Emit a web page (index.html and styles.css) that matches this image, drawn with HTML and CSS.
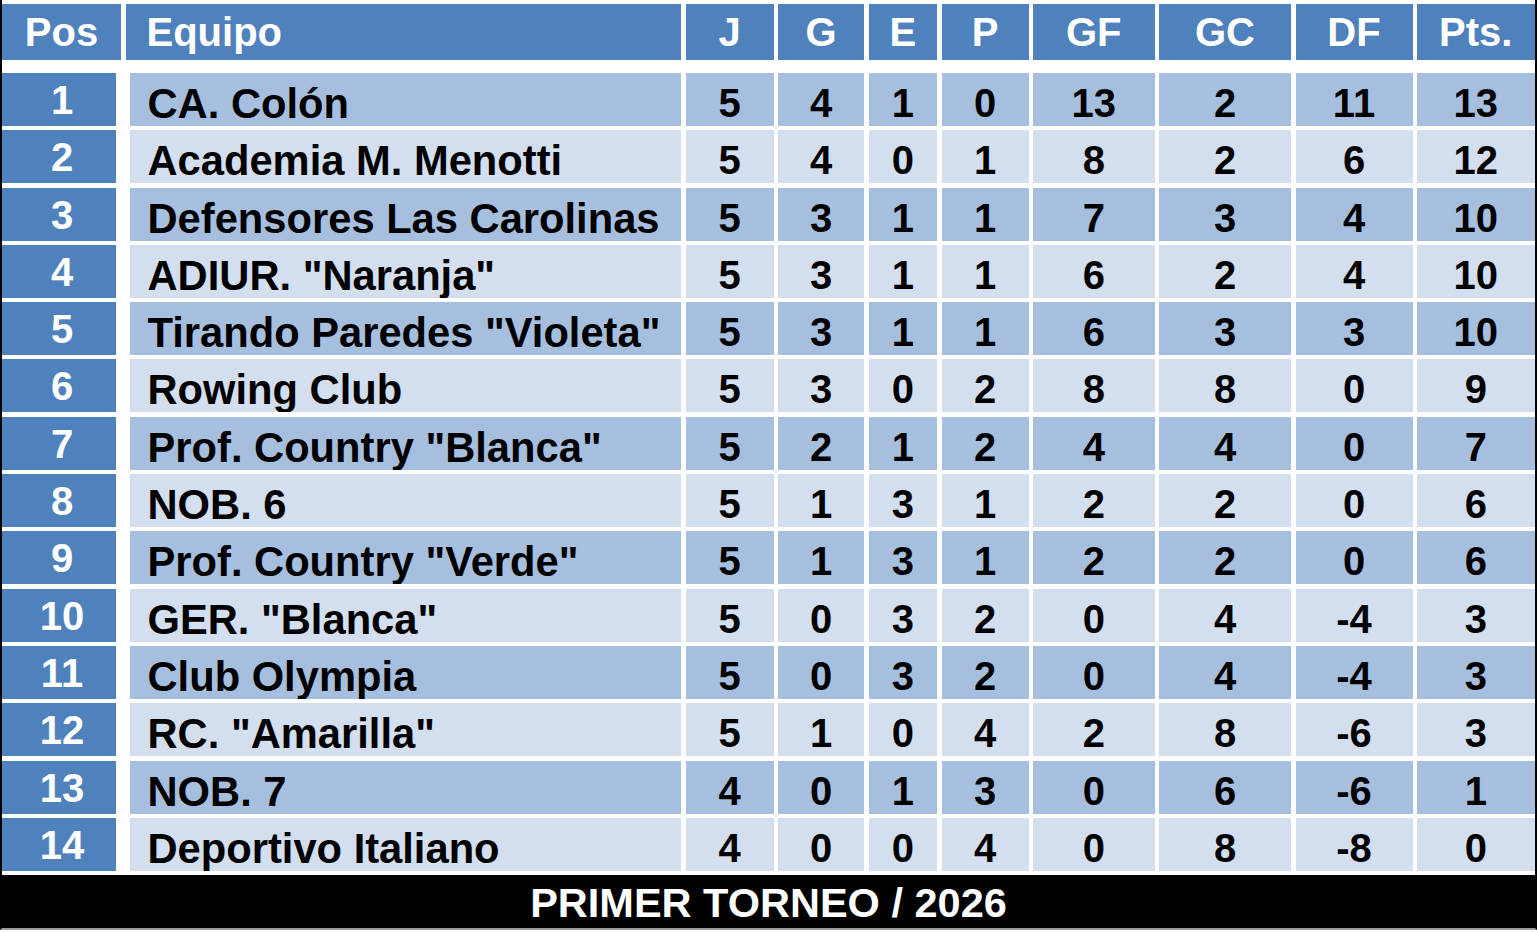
FILE: index.html
```html
<!DOCTYPE html>
<html lang="es">
<head>
<meta charset="utf-8">
<title>Tabla de posiciones - Primer Torneo 2026</title>
<link rel="stylesheet" href="styles.css">
</head>
<body>
<div class="board">
  <div class="head">
    <div class="hc">Pos</div>
    <div class="hc team">Equipo</div>
    <div class="hc">J</div>
    <div class="hc">G</div>
    <div class="hc">E</div>
    <div class="hc">P</div>
    <div class="hc">GF</div>
    <div class="hc">GC</div>
    <div class="hc">DF</div>
    <div class="hc">Pts.</div>
  </div>
  <div class="body" id="body"></div>
  <div class="foot">PRIMER TORNEO / 2026</div>
</div>
<script>
  var rows = [
    [1,"CA. Colón",5,4,1,0,13,2,11,13],
    [2,"Academia M. Menotti",5,4,0,1,8,2,6,12],
    [3,"Defensores Las Carolinas",5,3,1,1,7,3,4,10],
    [4,"ADIUR. \"Naranja\"",5,3,1,1,6,2,4,10],
    [5,"Tirando Paredes \"Violeta\"",5,3,1,1,6,3,3,10],
    [6,"Rowing Club",5,3,0,2,8,8,0,9],
    [7,"Prof. Country \"Blanca\"",5,2,1,2,4,4,0,7],
    [8,"NOB. 6",5,1,3,1,2,2,0,6],
    [9,"Prof. Country \"Verde\"",5,1,3,1,2,2,0,6],
    [10,"GER. \"Blanca\"",5,0,3,2,0,4,-4,3],
    [11,"Club Olympia",5,0,3,2,0,4,-4,3],
    [12,"RC. \"Amarilla\"",5,1,0,4,2,8,-6,3],
    [13,"NOB. 7",4,0,1,3,0,6,-6,1],
    [14,"Deportivo Italiano",4,0,0,4,0,8,-8,0]
  ];
  var body = document.getElementById("body");
  rows.forEach(function (r, i) {
    var shade = i % 2 === 0 ? "dark" : "light";
    r.forEach(function (v, j) {
      var c = document.createElement("div");
      if (j === 0) c.className = "pos";
      else if (j === 1) c.className = "cell name " + shade;
      else c.className = "cell num " + shade;
      c.textContent = v;
      body.appendChild(c);
    });
  });
</script>
</body>
</html>
```
FILE: styles.css
```css
html, body {
  margin: 0;
  padding: 0;
  background: #ffffff;
}

.board {
  width: 1537px;
  height: 930px;
  box-sizing: border-box;
  border-left: 2px solid #000;
  border-right: 2px solid #000;
  border-bottom: 2px solid #9a9a9a;
  padding-top: 4px;
  font-family: "Liberation Sans", Arial, sans-serif;
  font-weight: bold;
  font-size: 40px;
}

.head,
.body {
  display: grid;
  grid-template-columns: 119px 555.5px 88px 86px 68.5px 87px 121.5px 132px 117px 117.5px;
  column-gap: 4.5px;
}

.head {
  grid-template-rows: 56px;
}

.hc {
  background: #4f81bd;
  color: #ffffff;
  text-align: center;
  line-height: 56px;
  height: 56px;
  overflow: hidden;
}

.hc.team {
  text-align: left;
  padding-left: 21px;
}

.body {
  margin-top: 13px;
  grid-auto-rows: 53px;
  row-gap: 4.3px;
}

.pos {
  width: 114px;
  box-sizing: border-box;
  padding-left: 6px;
  background: #4f81bd;
  color: #ffffff;
  text-align: center;
  line-height: 53px;
  padding-top: 1px;
}

.cell {
  color: #000000;
  line-height: 53px;
  box-sizing: border-box;
  padding-top: 4px;
  overflow: hidden;
  white-space: nowrap;
}

.cell.name {
  margin-left: 4px;
  padding-left: 18px;
  font-size: 41.7px;
}

.cell.num {
  text-align: center;
}

.dark {
  background: #a7bfde;
}

.light {
  background: #d3dfee;
}

.foot {
  margin-top: 4.2px;
  height: 53px;
  background: #000000;
  color: #ffffff;
  text-align: center;
  font-size: 41.5px;
  line-height: 53px;
  padding-top: 1px;
  box-sizing: border-box;
}
```
